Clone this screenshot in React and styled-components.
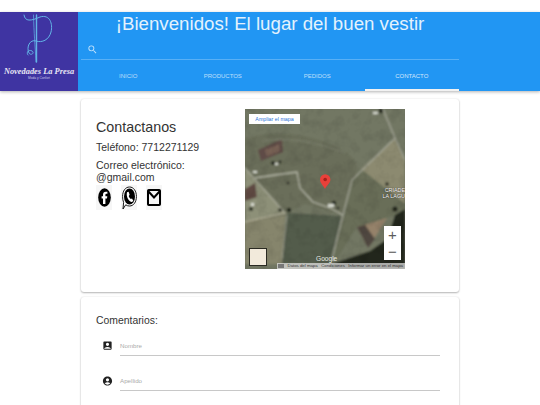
import React from "react";
import styled, { createGlobalStyle } from "styled-components";
import { MdSearch, MdAccountBox, MdAccountCircle } from "react-icons/md";

const GlobalStyle = createGlobalStyle`
  html, body {
    margin: 0;
    height: 405px;
    overflow: hidden;
    background: #fff;
    font-family: "Liberation Sans", Arial, sans-serif;
  }
`;

const Page = styled.div`
  padding-top: 12px;
`;

const Header = styled.header`
  height: 79px;
  display: flex;
  background: #2196f3;
  box-shadow: 0 1px 3px rgba(0, 0, 0, 0.3);
`;

const Logo = styled.div`
  width: 78px;
  flex: none;
  background: #3f34a2;
  display: flex;
  flex-direction: column;
  align-items: center;
`;

const LogoName = styled.div`
  font-family: "Liberation Serif", serif;
  font-style: italic;
  font-weight: bold;
  font-size: 8.4px;
  line-height: 9px;
  margin-top: 2px;
  color: #e8e6f4;
  white-space: nowrap;
`;

const LogoTagline = styled.div`
  font-size: 3.2px;
  line-height: 4px;
  color: #c9c6e6;
`;

const HeaderMain = styled.div`
  flex: 1;
  padding: 0 81px 0 3px;
  display: flex;
  flex-direction: column;
`;

const Title = styled.h1`
  margin: 0;
  height: 28px;
  font-size: 18.7px;
  line-height: 23px;
  font-weight: normal;
  text-align: center;
  white-space: nowrap;
  color: #e3f2fd;
`;

const SearchRow = styled.div`
  height: 19px;
  padding-left: 6px;
  display: flex;
  align-items: center;
  border-bottom: 1px solid rgba(255, 255, 255, 0.25);
  color: rgba(255, 255, 255, 0.75);
  font-size: 11px;
`;

const Tabs = styled.nav`
  flex: 1;
  display: grid;
  grid-template-columns: repeat(4, 1fr);
`;

const Tab = styled.div`
  display: flex;
  align-items: center;
  justify-content: center;
  font-size: 6px;
  padding-top: 2px;
  color: ${(p) => (p.$active ? "rgba(255,255,255,0.8)" : "rgba(255,255,255,0.7)")};
  border-bottom: 2px solid ${(p) => (p.$active ? "#f2f2f2" : "transparent")};
`;

const Content = styled.main`
  padding: 8px 81px 0;
  display: flex;
  flex-direction: column;
  gap: 5px;
`;

const Card = styled.section`
  background: #fff;
  border-radius: 3px;
  box-shadow: 0 1px 2px rgba(0, 0, 0, 0.28), 0 0 2px rgba(0, 0, 0, 0.1);
`;

const ContactCard = styled(Card)`
  height: 193px;
  box-sizing: border-box;
  padding: 10px 0 0 15px;
  display: flex;
`;

const ContactInfo = styled.div`
  width: 149px;
  flex: none;
  padding-top: 10px;
  color: #333;
`;

const Heading = styled.h2`
  margin: 0 0 6px;
  font-size: 14.3px;
  line-height: 16px;
  font-weight: normal;
`;

const InfoLine = styled.p`
  margin: 0 0 6px;
  font-size: 10.5px;
  line-height: 12px;
`;

const Socials = styled.div`
  display: flex;
  gap: 9px;
  margin-top: -4px;
`;

const SocialTile = styled.div`
  width: 16px;
  height: 25px;
  background: #f6f6f6;
  display: flex;
  align-items: center;
  justify-content: center;
`;

const MapFrame = styled.div`
  position: relative;
  width: 160px;
  height: 160px;
  flex: none;
  overflow: hidden;
  background: #6c7360;
`;

const MapArt = styled.svg`
  display: block;
`;

const EnlargeLink = styled.div`
  position: absolute;
  top: 5px;
  left: 4px;
  width: 51px;
  height: 10px;
  background: #fff;
  color: #2a73d8;
  font-size: 5.3px;
  line-height: 10px;
  text-align: center;
`;

const PlaceLabel = styled.div`
  position: absolute;
  top: 78px;
  right: 0;
  color: #fff;
  font-size: 5.4px;
  line-height: 6px;
  text-align: right;
  white-space: nowrap;
  text-shadow: 0 0 1px #000;
`;

const ZoomControl = styled.div`
  position: absolute;
  top: 117px;
  left: 139px;
  width: 17px;
  height: 34px;
  background: #fff;
  color: #5c5c5c;
  display: grid;
  grid-template-rows: 1fr 1fr;
  justify-items: center;
  align-items: center;
  font-size: 15px;
  line-height: 15px;
`;

const LayerThumb = styled.div`
  position: absolute;
  top: 139px;
  left: 4px;
  width: 18px;
  height: 18px;
  box-sizing: border-box;
  background: #f2eadb;
  border: 1px solid #2a2a22;
`;

const GoogleMark = styled.div`
  position: absolute;
  top: 146px;
  left: 71px;
  color: #e9ece6;
  font-size: 6.6px;
  line-height: 8px;
`;

const Attribution = styled.div`
  position: absolute;
  bottom: 0;
  right: 0;
  width: 128px;
  height: 6px;
  background: rgba(225, 225, 225, 0.72);
  color: #333;
  display: flex;
  align-items: center;
  justify-content: flex-end;
  gap: 3.5px;
  padding-right: 2px;
  box-sizing: border-box;
  font-size: 4.3px;
  line-height: 6px;
  white-space: nowrap;
`;

const KeyboardGlyph = styled.span`
  width: 8px;
  height: 4px;
  margin-right: auto;
  margin-left: 1px;
  background: #777;
`;

const CommentsCard = styled(Card)`
  padding: 17px 19px 30px 15px;
  color: #333;
`;

const CommentsTitle = styled.h3`
  margin: 0;
  font-size: 10.4px;
  line-height: 14px;
  font-weight: normal;
`;

const Field = styled.div`
  height: 35px;
  display: flex;
  align-items: center;
  gap: 7px;
  padding-left: 6px;
  color: #222;
`;

const FieldIcon = styled.div`
  width: 11px;
  height: 12px;
  flex: none;
  display: flex;
  align-items: center;
  justify-content: center;
`;

const FieldInput = styled.div`
  flex: 1;
  height: 20px;
  border-bottom: 1px solid #c8c8c8;
  font-size: 6.2px;
  line-height: 21px;
  color: #aaa;
`;

const LogoMark = () => (
  <svg width="78" height="53" viewBox="0 0 78 53" fill="none">
    <g stroke="#62b4e6" strokeLinecap="round" fill="none">
      <path d="M36.5 3 L36.5 50" strokeWidth="1.4" />
      <path d="M33.5 3 C34 22 35 32 36 50" strokeWidth="0.7" />
      <path
        d="M24 3 C25 10 31 9 40 5 C50 2 53 12 51 20 C49 28 42 31 36 29 C30 27 26 35 29 41 C31 44 35 41 32 39 C28 37 26 41 28 43"
        strokeWidth="1"
      />
    </g>
  </svg>
);

const SatelliteMap = () => (
  <MapArt width="160" height="160" viewBox="0 0 160 160">
    <defs>
      <filter id="soft" x="-5%" y="-5%" width="110%" height="110%">
        <feGaussianBlur stdDeviation="0.8" />
      </filter>
      <filter id="grain">
        <feTurbulence type="fractalNoise" baseFrequency="0.09" numOctaves="3" seed="7" />
        <feColorMatrix values="0 0 0 0 0  0 0 0 0 0  0 0 0 0 0  0 0 0 1.2 -0.5" />
      </filter>
    </defs>
    <g filter="url(#soft)">
      <rect width="160" height="160" fill="#727763" />
      <path d="M0 30 C30 20 60 25 85 35 C110 45 120 60 107 71 L98 106 L60 95 L40 104 L0 59Z" fill="#6a6e5a" />
      <path d="M116 60 L150 29 L160 51 V95 L135 75Z" fill="#8c8a70" />
      <path d="M107 71 L116 60 L135 75 L160 95 V105 L142 109 L112 118 L92 150 L87 150 L98 106Z" fill="#696e59" />
      <path d="M0 59 L40 104 L0 113Z" fill="#8d9078" />
      <path d="M0 113 L40 106 L37 155 H0Z" fill="#86856c" />
      <path d="M42 104 L96 107 L86 155 H37Z" fill="#525b4c" />
      <path d="M112 118 L142 109 L123 139Z" fill="#95826a" />
      <path d="M112 118 L120 116 L130 130 L123 139Z" fill="#4f4640" />
      <path d="M13 41 L37 30 L38 43 L16 52Z" fill="#5f4c46" />
      <path d="M20 41 L34 35 L35 42 L22 47Z" fill="#7a6356" />
      <path d="M0 80 L10 74 L12 88 L0 92Z" fill="#5e4a42" />
      <path d="M86 155 L125 142 L142 130 L150 106 L160 100 V160 H86Z" fill="#20261d" />
      <g stroke="#b3b5a5" fill="none" strokeLinecap="round">
        <path d="M10 69 L30 66 L52 63 L55 79 L68 93 L85 99 L98 106" strokeWidth="1.3" />
        <path d="M87 150 L98 106 L107 71 L150 29 L138 0" strokeWidth="1.3" stroke="#a2a495" />
        <path d="M150 29 L160 51" strokeWidth="1.2" stroke="#a2a495" />
        <path d="M0 59 L40 104" strokeWidth="1.4" stroke="#a5a795" />
        <path d="M40 104 L0 113" strokeWidth="1" stroke="#bdb8a0" />
        <path d="M42 106 L37 150" strokeWidth="1" stroke="#98998a" />
        <path d="M18 32 C40 28 70 32 100 44" strokeWidth="1" stroke="#7f8472" />
      </g>
      <g fill="#1d2118">
        <circle cx="28" cy="54" r="2" />
        <circle cx="35" cy="53" r="1.4" />
        <circle cx="6" cy="100" r="2" />
        <circle cx="35" cy="101" r="1.8" />
        <circle cx="44" cy="101" r="2.2" />
        <circle cx="89" cy="94" r="2.2" />
        <circle cx="93" cy="99" r="1.3" />
        <circle cx="43" cy="74" r="1.2" />
        <circle cx="142" cy="75" r="1.8" />
        <circle cx="150" cy="100" r="2.6" />
        <circle cx="136" cy="2" r="2.2" />
      </g>
      <g fill="#d9dcd2">
        <rect x="83" y="95" width="6" height="3" />
        <rect x="8" y="62" width="4" height="2" />
        <rect x="30" y="54" width="3" height="2" />
        <rect x="6" y="94" width="3" height="3" />
        <rect x="128" y="3" width="5" height="2" />
      </g>
    </g>
    <rect width="160" height="160" filter="url(#grain)" opacity="0.16" />
    <path d="M80 80 C78 76 75 74 75 70.5 A5.2 5.2 0 0 1 85.4 70.5 C85.4 74 82 76 80 80Z" fill="#e8403a" />
    <circle cx="80.2" cy="70.5" r="1.8" fill="#a3201c" />
  </MapArt>
);

const FacebookIcon = () => (
  <svg width="13" height="19" viewBox="0 0 13 19">
    <ellipse cx="6.5" cy="9.5" rx="6.3" ry="9.3" fill="#000" />
    <path d="M7.4 16 V10.4 H9 L9.3 8.2 H7.4 V7 C7.4 6.2 7.7 5.8 8.5 5.8 H9.4 V3.8 H7.9 C5.9 3.8 5 4.9 5 6.7 V8.2 H3.6 V10.4 H5 V16Z" fill="#fff" />
  </svg>
);

const WhatsappIcon = () => (
  <svg width="15" height="24" viewBox="0 0 15 24">
    <path d="M7.5 1 C11.6 1 14.4 5 14.4 10.5 C14.4 16 11.6 20 7.5 20 C6 20 4.8 19.6 3.7 18.8 L1 23 L1.6 16.4 C0.9 14.8 0.6 12.7 0.6 10.5 C0.6 5 3.4 1 7.5 1Z" fill="#fff" stroke="#000" strokeWidth="0.9" />
    <ellipse cx="7.5" cy="10.5" rx="5.5" ry="8" fill="#000" />
    <path d="M5 6.2 L6.6 5.8 L7.6 8.8 L6.7 10 C7.1 11.2 7.8 12.2 8.8 13 L10 12.4 L11.3 14.8 L10 15.9 C7 16 3.8 10.6 5 6.2Z" fill="#fff" />
  </svg>
);

const MailIcon = () => (
  <svg width="14" height="17" viewBox="0 0 14 17">
    <rect x="1" y="1" width="12" height="15" rx="0.8" fill="none" stroke="#000" strokeWidth="2" />
    <path d="M1.5 2.5 L7 8.5 L12.5 2.5" fill="none" stroke="#000" strokeWidth="2" />
  </svg>
);

const App = () => {
  const tabs = ["Inicio", "Productos", "Pedidos", "Contacto"];

  return (
    <Page>
      <GlobalStyle />
      <Header>
        <Logo>
          <LogoMark />
          <LogoName>Novedades La Presa</LogoName>
          <LogoTagline>Moda y Confort</LogoTagline>
        </Logo>
        <HeaderMain>
          <Title>¡Bienvenidos! El lugar del buen vestir</Title>
          <SearchRow>
            <MdSearch />
          </SearchRow>
          <Tabs>
            {tabs.map((t) => (
              <Tab key={t} $active={t === "Contacto"}>
                {t.toUpperCase()}
              </Tab>
            ))}
          </Tabs>
        </HeaderMain>
      </Header>
      <Content>
        <ContactCard>
          <ContactInfo>
            <Heading>Contactanos</Heading>
            <InfoLine>Teléfono: 7712271129</InfoLine>
            <InfoLine>
              Correo electrónico:
              <br />
              @gmail.com
            </InfoLine>
            <Socials>
              <SocialTile>
                <FacebookIcon />
              </SocialTile>
              <SocialTile>
                <WhatsappIcon />
              </SocialTile>
              <SocialTile>
                <MailIcon />
              </SocialTile>
            </Socials>
          </ContactInfo>
          <MapFrame>
            <SatelliteMap />
            <EnlargeLink>Ampliar el mapa</EnlargeLink>
            <PlaceLabel>
              CRIADE
              <br />
              LA LAGU
            </PlaceLabel>
            <ZoomControl>
              <span>+</span>
              <span>−</span>
            </ZoomControl>
            <LayerThumb />
            <GoogleMark>Google</GoogleMark>
            <Attribution>
              <KeyboardGlyph />
              <span>Datos del mapa</span>
              <span>Condiciones</span>
              <span>Informar un error en el mapa</span>
            </Attribution>
          </MapFrame>
        </ContactCard>
        <CommentsCard>
          <CommentsTitle>Comentarios:</CommentsTitle>
          <Field>
            <FieldIcon>
              <MdAccountBox size={15} />
            </FieldIcon>
            <FieldInput>Nombre</FieldInput>
          </Field>
          <Field>
            <FieldIcon>
              <MdAccountCircle size={14} />
            </FieldIcon>
            <FieldInput>Apellido</FieldInput>
          </Field>
        </CommentsCard>
      </Content>
    </Page>
  );
};

export default App;
